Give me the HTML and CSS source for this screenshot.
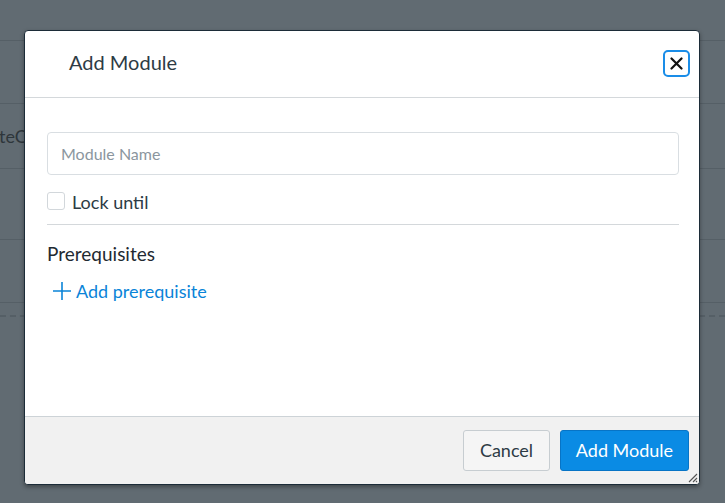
FILE: index.html
```html
<!DOCTYPE html>
<html>
<head>
<meta charset="utf-8">
<link rel="stylesheet" href="styles.css">
</head>
<body>
<div class="page">
  <div class="row r1"></div>
  <div class="row r2"></div>
  <div class="row r3"><span class="bgtext">teContent</span></div>
  <div class="row r4"></div>
  <div class="row r5"></div>
  <div class="row r6"></div>
  <div class="dashed"></div>
</div>

<div class="dialog">
  <div class="dlg-header">
    <h1 class="dlg-title">Add Module</h1>
    <button class="close-btn" aria-label="Close">
      <svg width="13" height="13" viewBox="0 0 13 13"><path d="M1.5 1.5 L11.5 11.5 M11.5 1.5 L1.5 11.5" stroke="#111" stroke-width="2.2" stroke-linecap="round"/></svg>
    </button>
  </div>
  <div class="dlg-body">
    <input class="name-input" type="text" placeholder="Module Name">
    <label class="lock-row"><span class="checkbox"></span><span class="lock-label">Lock until</span></label>
    <div class="divider"></div>
    <div class="prereq-title">Prerequisites</div>
    <a class="add-prereq" href="#">
      <svg width="20" height="20" viewBox="0 0 20 20"><path d="M10 1 V19 M1 10 H19" stroke="#0a84d8" stroke-width="1.6"/></svg>
      <span>Add prerequisite</span>
    </a>
  </div>
  <div class="dlg-footer">
    <button class="btn btn-cancel">Cancel</button>
    <button class="btn btn-primary">Add Module</button>
    <svg class="grip" width="12" height="12" viewBox="0 0 12 12"><path d="M11 3 L3 11 M11 7 L7 11 M11 10 L10 11" stroke="#555" stroke-width="1.1"/></svg>
  </div>
</div>
</body>
</html>
```
FILE: styles.css
```css
* { box-sizing: border-box; }
html, body { margin: 0; padding: 0; }
body {
  width: 725px;
  height: 503px;
  background: #616b72;
  font-family: Lato, "Liberation Sans", sans-serif;
  overflow: hidden;
  position: relative;
}
.page { width: 725px; }
.row { border-bottom: 1px solid #555f66; }
.r1 { height: 41px; }
.r2 { height: 63px; }
.r3 { height: 65px; display: flex; align-items: center; }
.r4 { height: 71px; }
.r5 { height: 63px; }
.r6 { height: 12px; border-bottom: none; }
.dashed { border-top: 2px dashed #555f66; }
.bgtext { font-size: 18px; color: #2e363b; margin-left: -1px; }

.dialog {
  position: absolute;
  left: 24px;
  top: 30px;
  width: 676px;
  height: 455px;
  background: #fff;
  border: 1px solid #1c2c38;
  border-radius: 4px;
  box-shadow: 0 2px 4px rgba(0,0,0,0.35);
  display: flex;
  flex-direction: column;
  overflow: hidden;
}
.dlg-header {
  height: 67px;
  flex: none;
  border-bottom: 1px solid #d4d8db;
  display: flex;
  align-items: center;
  justify-content: space-between;
  padding: 0 9px 0 44px;
}
.dlg-title {
  margin: 0;
  font-size: 20px;
  font-weight: 400;
  color: #2d3b45;
  position: relative;
  top: -2px;
}
.close-btn {
  width: 27px;
  height: 27px;
  border: 2px solid #1a8de8;
  border-radius: 5px;
  background: #fff;
  padding: 0;
  display: flex;
  align-items: center;
  justify-content: center;
  position: relative;
  top: -1px;
}
.dlg-body {
  flex: 1;
  padding: 34px 20px 0 22px;
  display: flex;
  flex-direction: column;
}
.name-input {
  width: 632px;
  height: 43px;
  border: 1px solid #d9dee2;
  border-radius: 4px;
  padding: 0 13px;
  font-family: Lato, "Liberation Sans", sans-serif;
  font-size: 16px;
  color: #2d3b45;
  outline: none;
}
.name-input::placeholder { color: #8b969e; }
.lock-row {
  display: flex;
  align-items: center;
  margin-top: 17px;
  height: 18px;
}
.checkbox {
  width: 18px;
  height: 18px;
  border: 1px solid #d2d7db;
  border-radius: 3px;
  background: #fff;
}
.lock-label {
  margin-left: 7px;
  font-size: 18px;
  line-height: 20px;
  color: #2d3b45;
  position: relative;
  top: 1px;
}
.divider {
  width: 632px;
  height: 1px;
  background: #d4d8db;
  margin-top: 14px;
}
.prereq-title {
  margin-top: 19px;
  font-size: 19px;
  color: #1f2a32;
  line-height: 20px;
}
.add-prereq {
  margin-top: 17px;
  display: flex;
  align-items: center;
  color: #0a84d8;
  text-decoration: none;
  font-size: 18px;
  line-height: 20px;
  padding-left: 5px;
}
.add-prereq span { margin-left: 4px; }
.dlg-footer {
  height: 68px;
  flex: none;
  background: #f1f1f1;
  border-top: 1px solid #cdd3d7;
  display: flex;
  align-items: center;
  justify-content: flex-end;
  padding: 0 10px 1px 0;
  gap: 10px;
  position: relative;
}
.btn {
  height: 41px;
  border-radius: 3px;
  font-family: Lato, "Liberation Sans", sans-serif;
  font-size: 18px;
  padding: 0;
}
.btn-cancel {
  width: 87px;
  background: #f5f5f5;
  border: 1px solid #c7cdd1;
  color: #2d3b45;
}
.btn-primary {
  width: 129px;
  background: #0a8be4;
  border: 1px solid #0774c6;
  color: #fff;
}
.grip {
  position: absolute;
  right: 1px;
  bottom: 1px;
}
```
